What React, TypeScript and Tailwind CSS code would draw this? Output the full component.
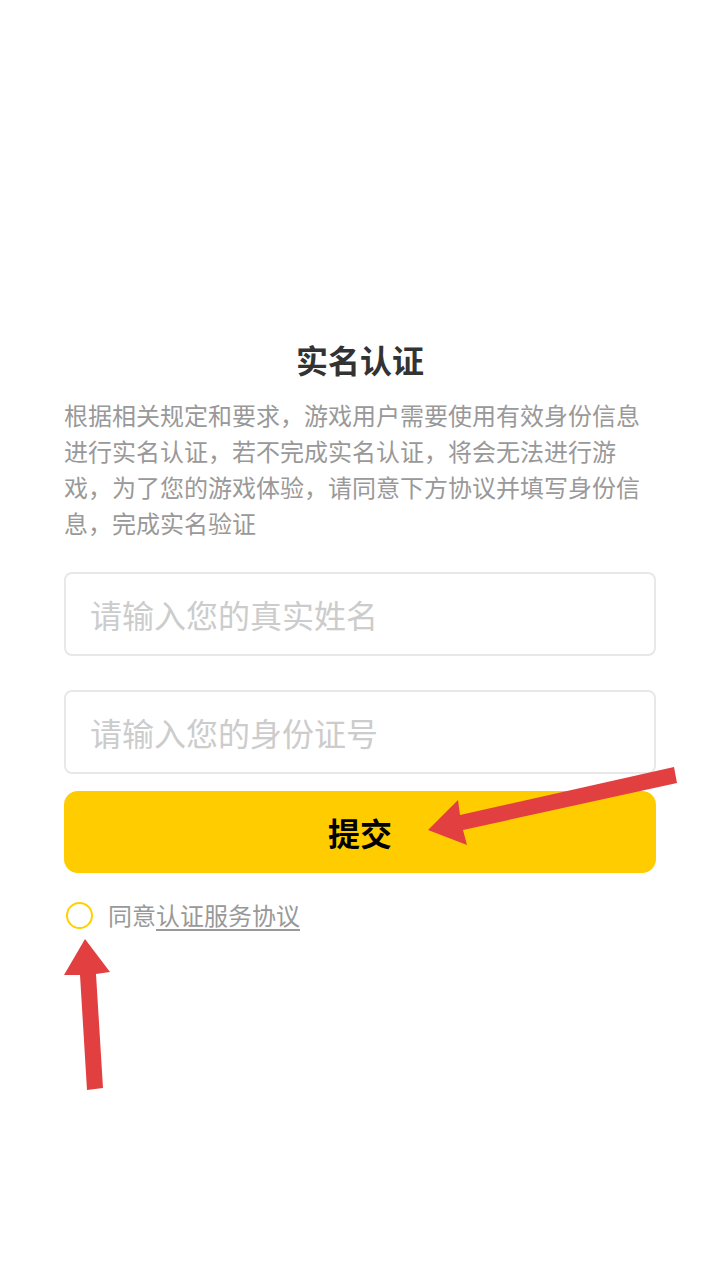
export default function App() {
  const font = { fontFamily: '"Noto Sans CJK SC", "Noto Sans", sans-serif' };

  return (
    <div className="relative w-[720px] h-[1280px] bg-white overflow-hidden" style={font}>
      <div className="px-16 pt-[337px]">
        <h1 className="h-[44px] text-center text-[32px] leading-[44px] font-bold text-[#333333]">实名认证</h1>
        <p className="mt-[16px] text-[24px] leading-[36px] text-[#999999]">
          根据相关规定和要求，游戏用户需要使用有效身份信息进行实名认证，若不完成实名认证，将会无法进行游戏，为了您的游戏体验，请同意下方协议并填写身份信息，完成实名验证
        </p>

        <input
          className="mt-[31px] block w-full h-[84px] rounded-[8px] border-2 border-[#e8e8e8] px-6 text-[32px] text-[#333] outline-none placeholder:text-[#cccccc]"
          placeholder="请输入您的真实姓名"
        />
        <input
          className="mt-[34px] block w-full h-[84px] rounded-[8px] border-2 border-[#e8e8e8] px-6 text-[32px] text-[#333] outline-none placeholder:text-[#cccccc]"
          placeholder="请输入您的身份证号"
        />

        <button className="mt-[17px] flex w-full h-[82px] items-center justify-center rounded-[14px] bg-[#ffcc00] text-[32px] font-bold text-black">
          提交
        </button>

        <div className="mt-[27px] flex items-center gap-[15px] pl-[2px]">
          <span className="block w-[27px] h-[27px] rounded-full border-2 border-[#ffd000]" />
          <span className="text-[24px] leading-[30px] text-[#999999]">
            同意<span className="underline underline-offset-[4px]">认证服务协议</span>
          </span>
        </div>
      </div>

      {/* annotation arrows */}
      <svg className="absolute inset-0 pointer-events-none" width="720" height="1280" viewBox="0 0 720 1280">
        <polygon
          fill="#e24040"
          points="674,767 677,783 463,830 467,845 428,830 458,800 460,815"
        />
        <polygon
          fill="#e24040"
          points="87,1090 103,1088 96,974 110,972 85,939 64,975 80,975"
        />
      </svg>
    </div>
  );
}
